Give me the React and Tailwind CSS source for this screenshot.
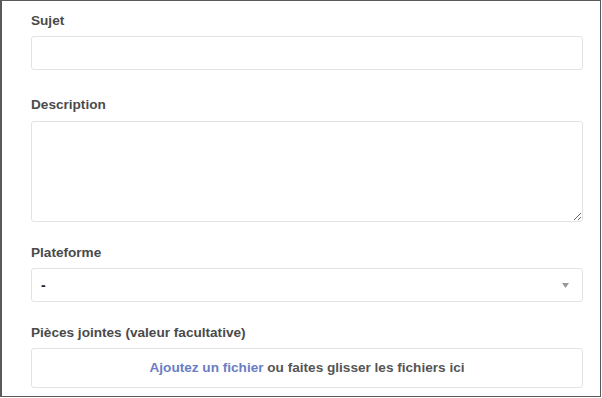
import React from "react";

export default function App() {
  const label = "block text-[13.6px] leading-[20px] font-bold text-[#4a4a4a]";
  const box = "w-[552px] border border-[#e3e3e3] rounded-[3px] bg-white";
  return (
    <div className="w-[602px] h-[398px] bg-white" style={{ fontFamily: '"Liberation Sans", Arial, sans-serif' }}>
      <div className="w-[601px] h-[397px] border border-[#5a5a5a] border-l-2 pl-[29px] pt-[10px]">
        <label className={label}>Sujet</label>
        <input className={`${box} h-[34px] mt-[5px] outline-none px-2`} />
        <label className={`${label} mt-[25px]`}>Description</label>
        <textarea className={`${box} h-[101px] mt-[6px] outline-none block resize-y p-2`} />
        <label className={`${label} mt-[21px]`}>Plateforme</label>
        <div className={`${box} h-[34px] mt-[5px] flex items-center justify-between pl-[9px] pr-[13px]`}>
          <span className="text-[14px] font-bold text-[#222]">-</span>
          <svg width="7" height="5" viewBox="0 0 7 5"><path d="M0 0h7L3.5 5z" fill="#999" /></svg>
        </div>
        <label className={`${label} mt-[21px]`}>Pièces jointes (valeur facultative)</label>
        <div className={`${box} h-[40px] mt-[5px] flex items-center justify-center text-[13.6px] font-bold text-[#555]`}>
          <span className="text-[#6a7dc4]">Ajoutez un fichier</span>
          <span>&nbsp;ou faites glisser les fichiers ici</span>
        </div>
      </div>
    </div>
  );
}
